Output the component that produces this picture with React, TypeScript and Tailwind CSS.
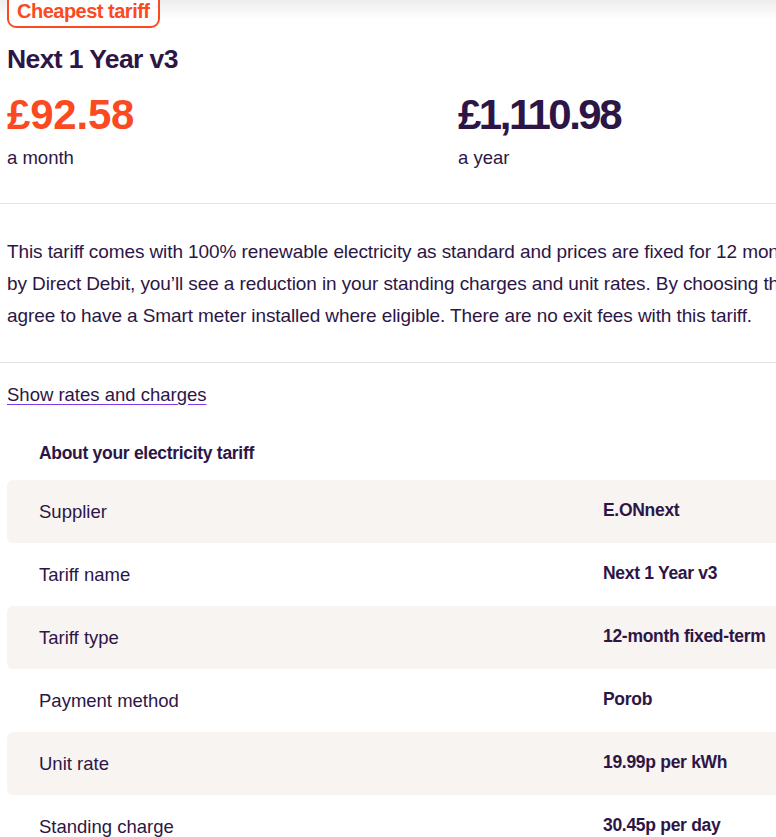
const rows = [
  { label: "Supplier", value: "E.ONnext" },
  { label: "Tariff name", value: "Next 1 Year v3" },
  { label: "Tariff type", value: "12-month fixed-term" },
  { label: "Payment method", value: "Porob" },
  { label: "Unit rate", value: "19.99p per kWh" },
  { label: "Standing charge", value: "30.45p per day" },
];

export default function App() {
  return (
    <div className="relative h-[837px] w-[776px] overflow-hidden bg-white font-['Liberation_Sans',Arial,sans-serif] text-[#2d1646]">
      {/* shadow from the header above */}
      <div className="pointer-events-none absolute inset-x-0 top-0 h-[20px] bg-gradient-to-b from-[#eeeeee] to-white/0" />

      <div className="w-[910px]">
        <section className="px-[7px]">
          <div className="relative -mt-[9px] inline-flex h-[37px] items-end rounded-[9px] border-2 border-[#fb4a22] bg-white px-[8px] pb-[3px]">
            <span className="text-[20px] font-bold leading-[24px] tracking-[-0.5px] text-[#fb4a22]">
              Cheapest tariff
            </span>
          </div>
          <h1 className="mt-[15px] text-[26.5px] font-bold leading-[32px] tracking-[-0.6px]">
            Next 1 Year v3
          </h1>
          <div className="mt-[16px] grid grid-cols-2">
            <div>
              <p className="text-[42px] font-bold leading-[48px] tracking-[-0.2px] text-[#fb4a22]">
                £92.58
              </p>
              <p className="mt-[7px] text-[18.5px] leading-[24px]">a month</p>
            </div>
            <div className="pl-[3px]">
              <p className="text-[42px] font-bold leading-[48px] tracking-[-2.5px]">
                £1,110.98
              </p>
              <p className="mt-[7px] text-[18.5px] leading-[24px]">a year</p>
            </div>
          </div>
        </section>

        <div className="mt-[33px] border-t border-[#e3e3e3]" />

        <p className="whitespace-nowrap px-[7px] pt-[32px] pb-[30px] text-[19px] leading-[32px] tracking-[-0.1px]">
          This tariff comes with 100% renewable electricity as standard and prices are fixed for 12 months. If you pay
          <br />
          by Direct Debit, you’ll see a reduction in your standing charges and unit rates. By choosing this tariff you
          <br />
          agree to have a Smart meter installed where eligible. There are no exit fees with this tariff.
        </p>

        <div className="border-t border-[#e3e3e3]" />

        <section className="px-[7px] pt-[20px]">
          <a
            href="#"
            className="text-[18.5px] leading-[24px] underline decoration-[#7c3aed] underline-offset-[3px]"
          >
            Show rates and charges
          </a>

          <h2 className="mt-[33px] px-[32px] text-[17.5px] font-bold leading-[24px] tracking-[-0.3px]">
            About your electricity tariff
          </h2>

          <div className="mt-[15px]">
            {rows.map((r, i) => (
              <div
                key={r.label}
                className={`grid h-[63px] grid-cols-[596px_1fr] items-center rounded-[6px] px-[32px] ${
                  i % 2 === 0 ? "bg-[#f8f4f2]" : "bg-white"
                }`}
              >
                <span className="text-[18.5px] leading-[24px]">{r.label}</span>
                <span className="-ml-[32px] -mt-[4px] text-[17.5px] font-bold leading-[24px] tracking-[-0.3px]">
                  {r.value}
                </span>
              </div>
            ))}
          </div>
        </section>
      </div>
    </div>
  );
}
